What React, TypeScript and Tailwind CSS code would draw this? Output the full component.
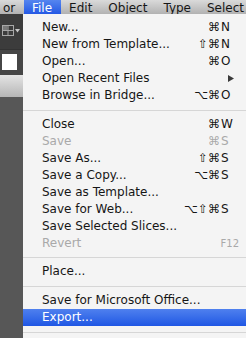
import React from "react";

type Item =
  | { kind: "sep"; h: number }
  | {
      kind: "item";
      label: string;
      mods?: string;
      k?: string;
      disabled?: boolean;
      submenu?: boolean;
      fkey?: string;
      active?: boolean;
    };

const items: Item[] = [
  { kind: "item", label: "New...", mods: "⌘", k: "N" },
  { kind: "item", label: "New from Template...", mods: "⇧⌘", k: "N" },
  { kind: "item", label: "Open...", mods: "⌘", k: "O" },
  { kind: "item", label: "Open Recent Files", submenu: true },
  { kind: "item", label: "Browse in Bridge...", mods: "⌥⌘", k: "O" },
  { kind: "sep", h: 12 },
  { kind: "item", label: "Close", mods: "⌘", k: "W" },
  { kind: "item", label: "Save", mods: "⌘", k: "S", disabled: true },
  { kind: "item", label: "Save As...", mods: "⇧⌘", k: "S" },
  { kind: "item", label: "Save a Copy...", mods: "⌥⌘", k: "S" },
  { kind: "item", label: "Save as Template..." },
  { kind: "item", label: "Save for Web...", mods: "⌥⇧⌘", k: "S" },
  { kind: "item", label: "Save Selected Slices..." },
  { kind: "item", label: "Revert", fkey: "F12", disabled: true },
  { kind: "sep", h: 11 },
  { kind: "item", label: "Place..." },
  { kind: "sep", h: 12 },
  { kind: "item", label: "Save for Microsoft Office..." },
  { kind: "item", label: "Export...", active: true },
  { kind: "sep", h: 12 },
];

const font = { fontFamily: '"DejaVu Sans", Verdana, sans-serif' };

function MenuRow({ item }: { item: Extract<Item, { kind: "item" }> }) {
  const color = item.active
    ? "text-white"
    : item.disabled
      ? "text-[#a9a9a9]"
      : "text-[#161616]";
  return (
    <div
      className={`flex h-[17px] items-center pl-[19px] text-[12px] leading-[17px] ${color} ${
        item.active ? "bg-gradient-to-b from-[#4f80ee] to-[#1f56e4]" : ""
      } ${item.fkey ? "pr-[7px]" : item.submenu ? "pr-[12px]" : "pr-[14px]"}`}
    >
      <span className="flex-1 whitespace-nowrap">{item.label}</span>
      {item.k && (
        <span className="flex">
          <span className="text-right">{item.mods}</span>
          <span className="w-[12px] pl-[1px]">{item.k}</span>
        </span>
      )}
      {item.fkey && <span className="text-[10px]">{item.fkey}</span>}
      {item.submenu && (
        <svg width="6" height="7" viewBox="0 0 6 7">
          <path d="M0 0 L6 3.5 L0 7 Z" fill="#3a3a3a" />
        </svg>
      )}
    </div>
  );
}

export default function App() {
  const bar = ["File", "Edit", "Object", "Type", "Select"];
  return (
    <div className="flex h-[338px] w-[246px] flex-col overflow-hidden bg-[#575757]" style={font}>
      <div className="flex h-[14px] shrink-0 overflow-hidden bg-gradient-to-b from-[#dadada] to-[#b2b2b2]">
        <div className="flex whitespace-nowrap text-[12px] leading-[16px] text-[#161616]">
          <span className="w-[24px] pl-[3px]">or</span>
          {bar.map((b) => (
            <span
              key={b}
              className={`px-[8px] ${
                b === "File"
                  ? "bg-gradient-to-b from-[#5585ef] to-[#2458e4] pr-[9px] text-white"
                  : ""
              }`}
            >
              {b}
            </span>
          ))}
        </div>
      </div>
      <div className="flex flex-1">
        <div className="flex w-[23px] shrink-0 flex-col">
          <div className="flex h-[35px] items-start bg-[#3c3c3c] pl-[2px] pt-[11px]">
            <svg width="12" height="11" viewBox="0 0 12 11">
              <rect x="0.5" y="0.5" width="11" height="10" fill="none" stroke="#a8a8a8" />
              <line x1="6" y1="0.5" x2="6" y2="10.5" stroke="#a8a8a8" />
              <line x1="0.5" y1="5.5" x2="11.5" y2="5.5" stroke="#a8a8a8" />
              <rect x="1" y="1" width="4.5" height="4" fill="#7a7a7a" />
            </svg>
            <svg className="ml-[1px] mt-[4px]" width="5" height="4" viewBox="0 0 5 4">
              <path d="M0 0 L5 0 L2.5 3.5 Z" fill="#c8c8c8" />
            </svg>
          </div>
          <div className="h-[26px] border-t border-[#333] bg-[#464646] pl-[2px] pt-[4px]">
            <div className="h-[16px] w-[15px] bg-white" />
          </div>
          <div className="h-[22px] bg-gradient-to-b from-[#e4e4e4] to-[#b6b6b6]" />
          <div className="flex-1 bg-[#575757]" />
        </div>
        <div className="flex-1 bg-[#f4f4f4] pt-[5px]">
          {items.map((it, i) =>
            it.kind === "sep" ? (
              <div
                key={i}
                className="flex items-center"
                style={{ height: it.h }}
              >
                <div className="h-px w-full bg-[#d6d6d6]" />
              </div>
            ) : (
              <MenuRow key={i} item={it} />
            )
          )}
        </div>
      </div>
    </div>
  );
}
